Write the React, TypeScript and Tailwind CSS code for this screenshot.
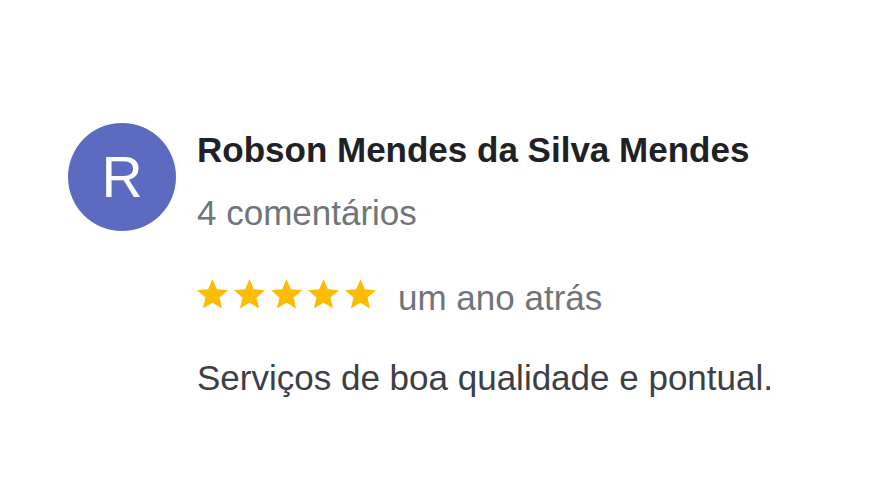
function Star() {
  return (
    <svg viewBox="2 2 20 19.3" className="w-[31px] h-[30px] fill-[#fbbc04]">
      <path d="M12 17.27L18.18 21l-1.64-7.03L22 9.24l-7.19-.61L12 2 9.19 8.63 2 9.24l5.46 4.73L5.82 21z" />
    </svg>
  )
}

export default function App() {
  return (
    <div className="w-[892px] h-[496px] bg-white font-['Liberation_Sans',Arial,sans-serif]">
      <div className="flex items-start pl-[68px] pt-[123px] gap-[21px]">
        <div className="w-[108px] h-[108px] shrink-0 rounded-full bg-[#5c6bc0] flex items-center justify-center text-white text-[57px] leading-none">
          R
        </div>
        <div className="flex flex-col pt-[7px]">
          <div className="text-[35px] leading-[40px] font-bold text-[#202124]">
            Robson Mendes da Silva Mendes
          </div>
          <div className="mt-[23px] text-[35px] leading-[40px] text-[#70757a]">4 comentários</div>
          <div className="mt-[45px] flex items-start h-[40px]">
            <div className="flex gap-[6px] mt-[1px]">
              <Star />
              <Star />
              <Star />
              <Star />
              <Star />
            </div>
            <span className="ml-[22px] text-[35px] leading-[40px] text-[#70757a]">um ano atrás</span>
          </div>
          <div className="mt-[40px] text-[35px] leading-[40px] text-[#3c4043]">
            Serviços de boa qualidade e pontual.
          </div>
        </div>
      </div>
    </div>
  )
}
